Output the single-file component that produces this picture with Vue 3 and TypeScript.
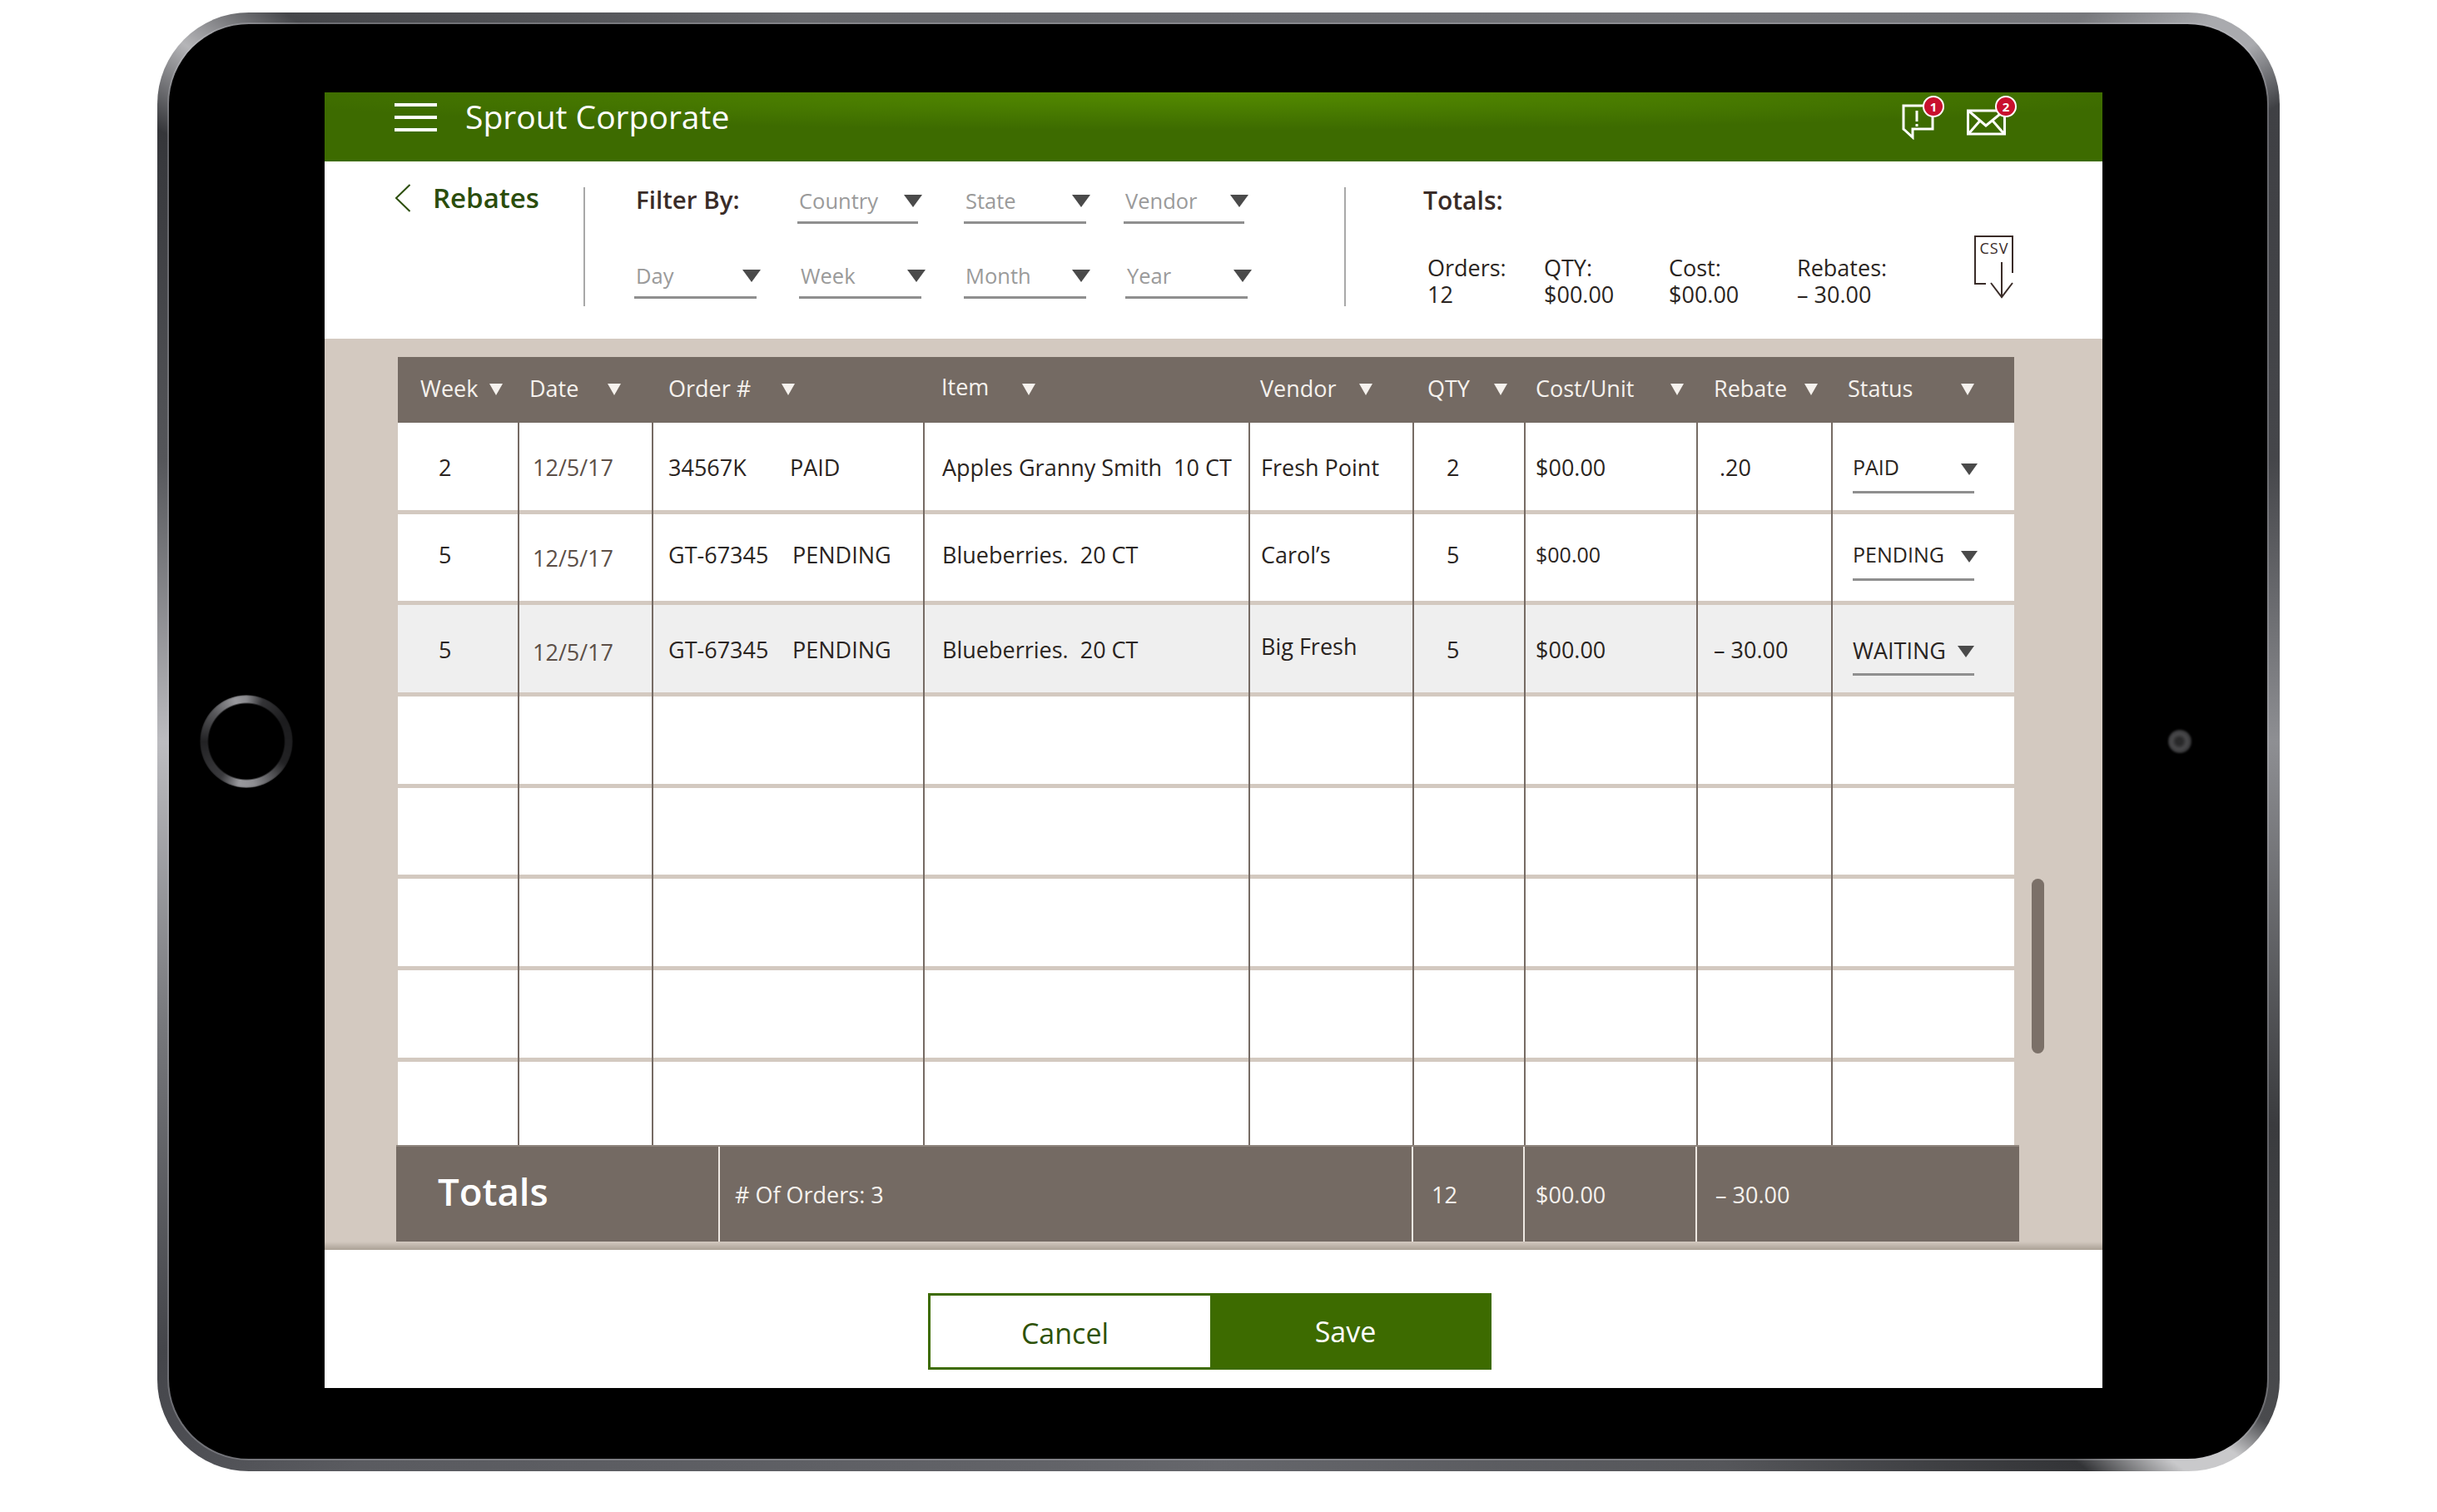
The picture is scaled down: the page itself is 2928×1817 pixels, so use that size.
<script setup lang="ts">
interface Rebate {
  week: string
  date: string
  order: string
  orderStatus: string
  item: string
  vendor: string
  qty: string
  cost: string
  rebate: string
  status: string
  dateDrop: number
}

const topFilters = [
  { label: 'Country', gap: 0, width: 145 },
  { label: 'State', gap: 55, width: 147 },
  { label: 'Vendor', gap: 45, width: 145 }
]
const bottomFilters = [
  { label: 'Day', gap: 0, width: 147 },
  { label: 'Week', gap: 51, width: 147 },
  { label: 'Month', gap: 51, width: 147 },
  { label: 'Year', gap: 47, width: 147 }
]

const stats = [
  { label: 'Orders:', value: '12' },
  { label: 'QTY:', value: '$00.00' },
  { label: 'Cost:', value: '$00.00' },
  { label: 'Rebates:', value: '– 30.00' }
]

// left = gap before the label, right = gap after the sort arrow
const columns = [
  { label: 'Week', left: 27, right: 20 },
  { label: 'Date', left: 12, right: 39 },
  { label: 'Order #', left: 18, right: 154 },
  { label: 'Item', left: 22, right: 256 },
  { label: 'Vendor', left: 14, right: 48 },
  { label: 'QTY', left: 18, right: 20 },
  { label: 'Cost/Unit', left: 14, right: 15 },
  { label: 'Rebate', left: 21, right: 18 },
  { label: 'Status', left: 18, right: 48 }
]

const blank: Rebate = {
  week: '', date: '', order: '', orderStatus: '', item: '', vendor: '',
  qty: '', cost: '', rebate: '', status: '', dateDrop: 0
}

const rows: Rebate[] = [
  {
    week: '2', date: '12/5/17', order: '34567K', orderStatus: 'PAID',
    item: 'Apples Granny Smith  10 CT', vendor: 'Fresh Point', qty: '2',
    cost: '$00.00', rebate: '.20', status: 'PAID', dateDrop: 0
  },
  {
    week: '5', date: '12/5/17', order: 'GT-67345', orderStatus: 'PENDING',
    item: 'Blueberries.  20 CT', vendor: 'Carol’s', qty: '5',
    cost: '$00.00', rebate: '', status: 'PENDING', dateDrop: 9
  },
  {
    week: '5', date: '12/5/17', order: 'GT-67345', orderStatus: 'PENDING',
    item: 'Blueberries.  20 CT', vendor: 'Big Fresh', qty: '5',
    cost: '$00.00', rebate: '– 30.00', status: 'WAITING', dateDrop: 6
  },
  blank, blank, blank, blank, blank
]
</script>

<template>
  <div class="page">
    <div class="device">
      <div class="bezel">
        <span class="home-ring"></span>
        <span class="camera"></span>

        <main class="screen">
          <header class="appbar">
            <div class="burger"><i></i><i></i><i></i></div>
            <h1 class="app-title">Sprout Corporate</h1>
            <div class="appbar-icons">
              <svg class="alert-icon" viewBox="0 0 56 56" width="56" height="56">
                <path d="M5 15H40V43H16V53L5 43Z" fill="none" stroke="#fff" stroke-width="3" />
                <path d="M21 21V34M21 37V40" fill="none" stroke="#fff" stroke-width="3" />
                <circle cx="41" cy="16" r="12" fill="#c8102e" stroke="#fff" stroke-width="2" />
                <text x="41" y="21.5" class="badge-num">1</text>
              </svg>
              <svg class="mail-icon" viewBox="0 0 66 56" width="66" height="56">
                <rect x="6.5" y="21" width="44" height="28" fill="none" stroke="#fff" stroke-width="3" />
                <path d="M7 21L28 39L50 21M7 49L21 33M50 49L36 33" fill="none" stroke="#fff" stroke-width="3" />
                <circle cx="52" cy="16" r="12" fill="#c8102e" stroke="#fff" stroke-width="2" />
                <text x="52" y="21.5" class="badge-num">2</text>
              </svg>
            </div>
          </header>

          <section class="toolbar">
            <div class="back">
              <svg class="chevron" viewBox="0 0 20 34" width="20" height="34">
                <path d="M18.5 1L2 17L18.5 33" fill="none" stroke="#2b4d0c" stroke-width="2" />
              </svg>
              <span class="back-title">Rebates</span>
            </div>
            <span class="divider"></span>

            <div class="filters">
              <div class="filter-row top">
                <span class="filter-label">Filter By:</span>
                <div
                  v-for="f in topFilters"
                  :key="f.label"
                  class="select"
                  :style="{ marginLeft: f.gap + 'px', width: f.width + 'px' }"
                >
                  <span>{{ f.label }}</span><i class="arrow"></i>
                </div>
              </div>
              <div class="filter-row bottom">
                <div
                  v-for="f in bottomFilters"
                  :key="f.label"
                  class="select"
                  :style="{ marginLeft: f.gap + 'px', width: f.width + 'px' }"
                >
                  <span>{{ f.label }}</span><i class="arrow"></i>
                </div>
              </div>
            </div>
            <span class="divider"></span>

            <div class="totals">
              <div class="totals-title">Totals:</div>
              <div class="stats">
                <div v-for="s in stats" :key="s.label" class="stat">
                  <div>{{ s.label }}</div>
                  <div>{{ s.value }}</div>
                </div>
              </div>
            </div>

            <div class="csv">
              <svg viewBox="0 0 50 78" width="50" height="78">
                <path d="M47 46V2H2V59H15M34 33V74M21 58L34 75L47 58" fill="none" stroke="#3a2c28" stroke-width="2" />
                <text x="25" y="23" class="csv-text">CSV</text>
              </svg>
            </div>
          </section>

          <section class="content">
            <div class="table">
              <div class="thead">
                <div
                  v-for="c in columns"
                  :key="c.label"
                  class="th"
                  :class="{ raised: c.label === 'Item' }"
                  :style="{ paddingLeft: c.left + 'px', paddingRight: c.right + 'px' }"
                >
                  <span>{{ c.label }}</span><i class="sort"></i>
                </div>
              </div>

              <div class="tbody">
                <div
                  v-for="(r, i) in rows"
                  :key="i"
                  class="row"
                  :class="'row-' + (i + 1)"
                >
                  <div class="td week">{{ r.week }}</div>
                  <div class="td date">
                    <span :style="{ marginTop: r.dateDrop + 'px' }">{{ r.date }}</span>
                  </div>
                  <div class="td order">
                    <span class="order-no">{{ r.order }}</span><span>{{ r.orderStatus }}</span>
                  </div>
                  <div class="td item">{{ r.item }}</div>
                  <div class="td vendor" :class="{ high: r.vendor === 'Big Fresh' }">{{ r.vendor }}</div>
                  <div class="td qty">{{ r.qty }}</div>
                  <div class="td cost" :class="{ small: r.vendor === 'Carol’s' }">{{ r.cost }}</div>
                  <div class="td rebate" :class="{ nudge: r.rebate === '.20' }">{{ r.rebate }}</div>
                  <div class="td status">
                    <div v-if="r.status" class="status-select" :class="{ big: r.status === 'WAITING' }">
                      <span>{{ r.status }}</span><i class="arrow"></i>
                    </div>
                  </div>
                </div>
              </div>

              <div class="tfoot">
                <div class="tf totals-cell"><span>Totals</span></div>
                <div class="tf orders-cell"># Of Orders: 3</div>
                <div class="tf qty-cell">12</div>
                <div class="tf cost-cell">$00.00</div>
                <div class="tf rebate-cell">– 30.00</div>
              </div>
            </div>
            <span class="scrollbar"></span>
          </section>

          <footer class="actions">
            <button type="button" class="btn cancel">Cancel</button>
            <button type="button" class="btn save">Save</button>
          </footer>
        </main>
      </div>
    </div>
  </div>
</template>

<style scoped>
.page {
  width: 2928px;
  height: 1817px;
  padding: 15px 0 0 189px;
  box-sizing: border-box;
  background: #fff;
  font-family: "Open Sans", "Liberation Sans", sans-serif;
  color: #2a2421;
  overflow: hidden;
}

/* Tablet frame */
.device {
  width: 2550px;
  height: 1753px;
  padding: 14px 15px 15px 14px;
  box-sizing: border-box;
  border-radius: 110px;
  background: conic-gradient(
    #6a6b70 0deg,
    #77787c 50deg,
    #a9aaae 54deg,
    #a9aaae 56deg,
    #3f4044 59deg,
    #45464a 75deg,
    #8e8f93 90deg,
    #3a3b3e 110deg,
    #4a4b4e 123deg,
    #c9c9cb 125deg,
    #c9c9cb 127deg,
    #333437 130deg,
    #55565a 145deg,
    #65666b 180deg,
    #5a5b60 230deg,
    #44454a 240deg,
    #77787c 255deg,
    #bcbcc0 270deg,
    #55565a 285deg,
    #35363a 300deg,
    #b5b5b8 304deg,
    #45464a 308deg,
    #66676b 330deg,
    #6a6b70 360deg
  );
}

.bezel {
  position: relative;
  height: 100%;
  padding: 82px 198px 85px 187px;
  box-sizing: border-box;
  border-radius: 96px;
  background: #000;
  box-shadow: 0 0 0 2px rgba(200, 200, 205, 0.3);
}

.home-ring {
  position: absolute;
  left: 37px;
  top: 806px;
  width: 112px;
  height: 112px;
  border-radius: 50%;
  background: conic-gradient(#8a8a8e 0deg, #333336 22deg, #1c1c1e 60deg, #222224 120deg, #8f8f93 170deg, #9a9a9e 190deg, #3a3a3d 215deg, #222224 270deg, #555558 310deg, #9a9a9e 345deg, #8a8a8e 360deg);
  -webkit-mask: radial-gradient(circle, transparent 45px, #000 47px, #000 55px, transparent 57px);
  mask: radial-gradient(circle, transparent 45px, #000 47px, #000 55px, transparent 57px);
  filter: blur(1px);
}

.camera {
  position: absolute;
  left: 2402px;
  top: 848px;
  width: 28px;
  height: 28px;
  border-radius: 50%;
  background: radial-gradient(circle at 48% 50%, #2b2b2c 0, #262627 18%, #4a4a4c 45%, #333335 70%, #0a0a0a 100%);
  filter: blur(1px);
}

.screen {
  height: 100%;
  background: #fff;
  display: flex;
  flex-direction: column;
}

/* App bar */
.appbar {
  height: 83px;
  padding: 0 102px 23px 84px;
  box-sizing: border-box;
  flex: none;
  display: flex;
  align-items: center;
  background: radial-gradient(ellipse 55% 55% at 50% 0, #548b00 0, rgba(84, 139, 0, 0) 100%), #3d6b00;
}

.burger {
  width: 51px;
  display: flex;
  flex-direction: column;
  gap: 11px;
}

.burger i {
  display: block;
  height: 4px;
  background: #fff;
}

.app-title {
  margin: -2px 0 0 34px;
  font-size: 39px;
  font-weight: 400;
  color: #fff;
  line-height: 1.2;
}

.appbar-icons {
  margin-left: auto;
  margin-top: 21px;
  align-self: flex-start;
  display: flex;
  gap: 20px;
  height: 56px;
}

.appbar-icons svg {
  display: block;
  margin-top: -20px;
}

.badge-num {
  font-family: "Open Sans", sans-serif;
  font-size: 15px;
  font-weight: 700;
  fill: #fff;
  text-anchor: middle;
}

/* Filter strip */
.toolbar {
  height: 213px;
  padding-top: 31px;
  padding-left: 84px;
  box-sizing: border-box;
  flex: none;
  display: flex;
  align-items: flex-start;
}

.back {
  width: 227px;
  flex: none;
  display: flex;
  align-items: center;
  margin-top: -7px;
}

.chevron {
  display: block;
}

.back-title {
  margin-left: 26px;
  font-size: 33px;
  font-weight: 600;
  color: #2b4d0c;
  line-height: 40px;
}

.divider {
  width: 2px;
  height: 143px;
  flex: none;
  background: #a8a8a8;
}

.filters {
  width: 912px;
  flex: none;
  box-sizing: border-box;
}

.filter-row {
  display: flex;
}

.filter-row.top {
  padding-left: 61px;
}

.filter-row.bottom {
  padding-left: 59px;
  margin-top: 46px;
}

.filter-label {
  width: 194px;
  flex: none;
  margin-top: -3px;
  font-size: 29.5px;
  font-weight: 600;
  color: #3a2c28;
  line-height: 36px;
}

.select {
  height: 44px;
  padding: 0 0 9px 2px;
  box-sizing: border-box;
  flex: none;
  display: flex;
  justify-content: space-between;
  align-items: center;
  border-bottom: 3px solid #8f8f8f;
  font-size: 25.5px;
  color: #9a9a9a;
}

.arrow {
  display: block;
  width: 0;
  height: 0;
  margin-right: -5px;
  border-left: 11px solid transparent;
  border-right: 11px solid transparent;
  border-top: 15px solid #4a4a4a;
}

.totals {
  width: 754px;
  flex: none;
  padding-left: 93px;
  box-sizing: border-box;
}

.totals-title {
  margin-top: -4px;
  font-size: 30px;
  font-weight: 600;
  color: #3a2c28;
  line-height: 40px;
}

.stats {
  margin: 45px 0 0 5px;
  display: grid;
  grid-template-columns: 140px 150px 154px auto;
  font-size: 27px;
  line-height: 32px;
  color: #2a2421;
}

.csv {
  margin-top: 57px;
  flex: none;
}

.csv svg {
  display: block;
}

.csv-text {
  font-family: "Open Sans", sans-serif;
  font-size: 18px;
  fill: #3a2c28;
  text-anchor: middle;
  letter-spacing: 1px;
}

/* Table area */
.content {
  position: relative;
  height: 1095px;
  flex: none;
  padding: 22px 106px 0 88px;
  box-sizing: border-box;
  background: linear-gradient(to bottom, #d3c9c0 0, #d3c9c0 1085px, #aba196 1095px);
}

.table {
  width: 1942px;
}

.thead,
.row {
  display: grid;
  grid-template-columns: 146px 161px 324px 391px 197px 134px 207px 164px 218px;
}

.thead {
  height: 79px;
  background: #746a63;
}

.th {
  display: flex;
  justify-content: space-between;
  align-items: center;
  padding-bottom: 4px;
  font-size: 27px;
  color: #f6f2ee;
}

.th.raised span {
  margin-top: -5px;
}

.sort {
  display: block;
  width: 0;
  height: 0;
  margin-top: 3px;
  border-left: 8.5px solid transparent;
  border-right: 8.5px solid transparent;
  border-top: 14px solid #f6f2ee;
}

.tbody {
  height: 868px;
  overflow: hidden;
}

.row {
  height: 109.7px;
  padding-bottom: 5px;
  box-sizing: border-box;
  background: #fff;
  box-shadow: inset 0 -5px 0 #d3c9c0;
}

.row-3 {
  background: #efefef;
}

.td {
  display: flex;
  align-items: center;
  margin-bottom: -5px;
  margin-right: -2px;
  padding-bottom: 5px;
  border-right: 2px solid #766b64;
  font-size: 27px;
  white-space: pre;
}

.td.week,
.td.date,
.td.rebate {
  margin-right: 0;
}

.td:last-child {
  border-right: 0;
  margin-right: 0;
}

.row-1 .td {
  padding-top: 2px;
}

.row-2 .td {
  padding-bottom: 13px;
}

.row-3 .td {
  padding-top: 1px;
}

.row-3 .td.high {
  padding-bottom: 13px;
}

.week { padding-left: 49px; }
.date { padding-left: 16px; color: #5c4f48; }
.order { padding-left: 18px; }
.order-no { width: 149px; flex: none; }
.row-1 .order-no { width: 146px; }
.item { padding-left: 23px; }
.vendor { padding-left: 15px; }
.qty { padding-left: 41px; }
.cost { padding-left: 14px; }
.cost.small { font-size: 25px; }
.rebate { padding-left: 21px; }
.rebate.nudge { padding-left: 28px; }
.status { padding-left: 24px; }

.status-select {
  width: 146px;
  height: 56px;
  margin-top: 8px;
  box-sizing: border-box;
  display: flex;
  justify-content: space-between;
  align-items: center;
  padding-bottom: 6px;
  border-bottom: 3px solid #8f8f8f;
  font-size: 25px;
}

.status-select.big {
  font-size: 27px;
}

.status-select.big span {
  margin-top: 4px;
}

.status-select .arrow {
  margin-right: -4px;
  margin-top: 6px;
  border-left-width: 10px;
  border-right-width: 10px;
  border-top-width: 14px;
}

.status-select.big .arrow {
  margin-right: 0;
}

.tfoot {
  display: grid;
  grid-template-columns: 387px 833px 134px 207px 389px;
  width: 1950px;
  height: 116px;
  margin-left: -2px;
  box-sizing: border-box;
  border-top: 2px solid #8f857d;
  background: #746a63;
  color: #f6f2ee;
  font-size: 27px;
}

.tf {
  display: flex;
  align-items: center;
  border-left: 2px solid #eee8e2;
}

.totals-cell {
  border-left: 0;
  padding-left: 50px;
  font-size: 45.5px;
  font-weight: 600;
  color: #fff;
}

.totals-cell span {
  margin-top: -8px;
}

.orders-cell { padding-left: 18px; }
.qty-cell { padding-left: 22px; }
.cost-cell { padding-left: 13px; }
.rebate-cell { padding-left: 22px; }

.scrollbar {
  position: absolute;
  left: 2051px;
  top: 649px;
  width: 15px;
  height: 210px;
  border-radius: 8px;
  background: #7b7068;
}

/* Bottom buttons */
.actions {
  flex: 1;
  padding: 52px 0 0 725px;
  box-sizing: border-box;
  display: flex;
  align-items: flex-start;
}

.btn {
  height: 92px;
  margin: 0;
  padding: 0 13px 0 0;
  font-family: inherit;
  font-size: 34px;
  font-weight: 400;
  border-radius: 0;
  cursor: pointer;
}

.cancel {
  width: 339px;
  padding-top: 3px;
  border: 3px solid #3d6b00;
  border-right: 0;
  background: #fff;
  color: #2e5208;
}

.save {
  width: 338px;
  border: 0;
  background: #3d6b00;
  color: #fff;
}
</style>
